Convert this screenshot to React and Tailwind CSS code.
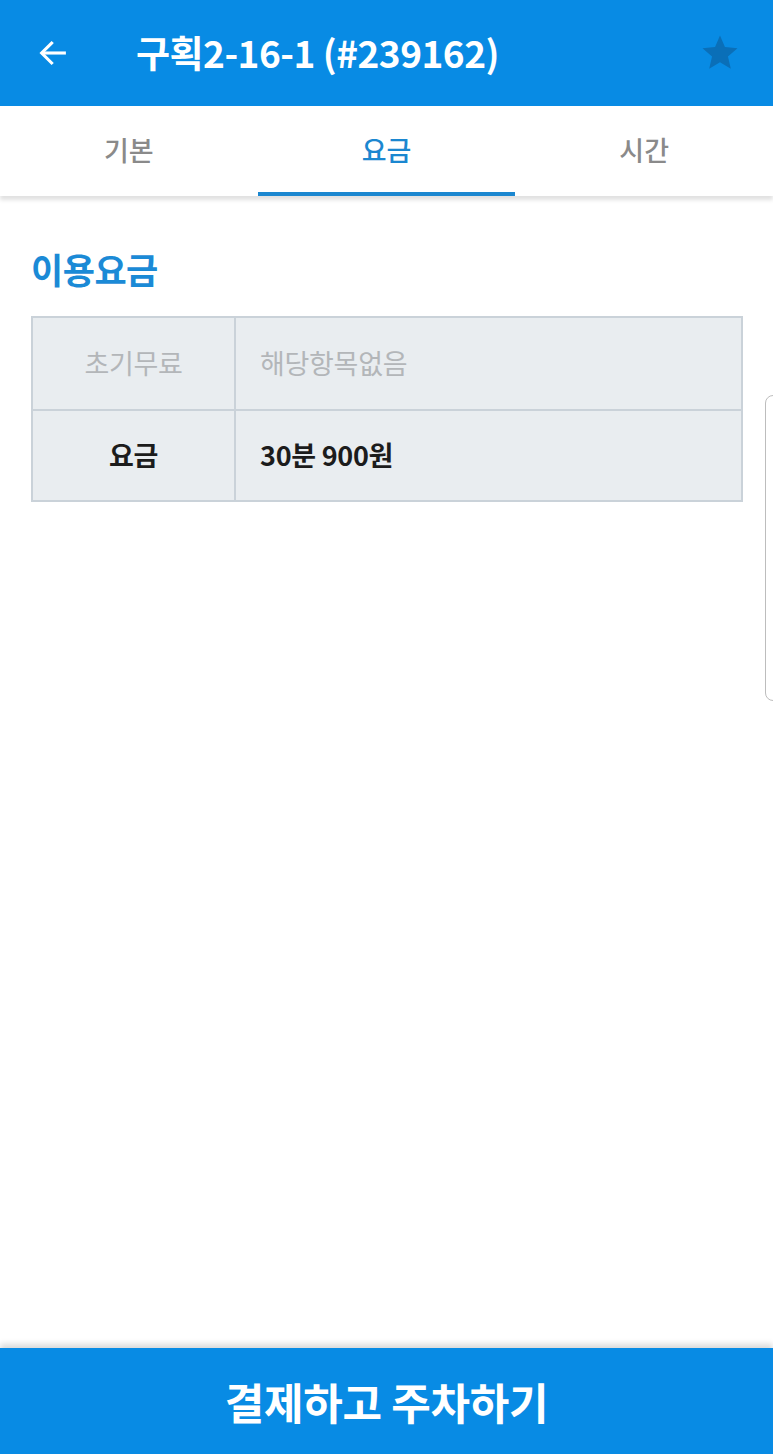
import React from 'react';

const font = { fontFamily: '"Noto Sans CJK KR", "Noto Sans", sans-serif' };

const rows = [
  { label: '초기무료', value: '해당항목없음', muted: true },
  { label: '요금', value: '30분 900원', muted: false },
];

const App = () => {
  return (
    <div className="relative w-[773px] h-[1454px] bg-white flex flex-col overflow-hidden" style={font}>
      {/* Header */}
      <div className="h-[106px] bg-[#088be4] flex items-center px-[36px] shrink-0">
        <svg width="34" height="34" viewBox="0 0 24 24" fill="none" stroke="white" strokeWidth="2.2" strokeLinecap="square">
          <path d="M20 12H5" />
          <path d="M11 5l-7 7 7 7" />
        </svg>
        <div className="ml-[66px] text-white text-[37px] font-bold tracking-[-0.5px] flex-1">구획2-16-1 (#239162)</div>
        <svg width="42" height="42" viewBox="0 0 24 24" fill="#0a6fb8" className="-mr-[4px]">
          <path d="M12 17.27L18.18 21l-1.64-7.03L22 9.24l-7.19-.61L12 2 9.19 8.63 2 9.24l5.46 4.73L5.82 21z" />
        </svg>
      </div>

      {/* Tabs */}
      <div className="h-[90px] flex shrink-0 shadow-[0_4px_4px_rgba(0,0,0,0.12)] relative z-10 bg-white">
        {['기본', '요금', '시간'].map((t, i) => (
          <div key={t} className="flex-1 flex flex-col">
            <div className={`flex-1 flex items-center justify-center pt-[3px] text-[27px] font-medium ${i === 1 ? 'text-[#1b87d0]' : 'text-[#8a8a8a]'}`}>
              {t}
            </div>
            <div className={`h-[4px] ${i === 1 ? 'bg-[#1b87d0]' : ''}`} />
          </div>
        ))}
      </div>

      {/* Content */}
      <div className="flex-1 px-[31px] pt-[55px]">
        <div className="text-[35px] font-bold text-[#1b8ad6] leading-none tracking-[-0.5px]">이용요금</div>
        <div className="mt-[30px] w-[712px] border-2 border-[#cad2d9] bg-[#e9edf0]">
          {rows.map((r, i) => (
            <div key={r.label} className={`flex h-[91px] ${i > 0 ? 'border-t-2 border-[#cad2d9]' : ''}`}>
              <div className={`w-[203px] border-r-2 border-[#cad2d9] flex items-center justify-center text-[27px] tracking-[-0.3px] ${r.muted ? 'text-[#b3b6b9]' : 'text-[#1c1c1c] font-bold'}`}>
                {r.label}
              </div>
              <div className={`flex-1 flex items-center pl-[24px] text-[27px] tracking-[-0.3px] ${r.muted ? 'text-[#b3b6b9]' : 'text-[#1c1c1c] font-bold'}`}>
                {r.value}
              </div>
            </div>
          ))}
        </div>
      </div>

      {/* Bottom button */}
      <div className="h-[106px] shrink-0 bg-[#088be4] flex items-center justify-center text-white text-[43px] font-bold tracking-[-0.3px] shadow-[0_-4px_6px_rgba(0,0,0,0.15)]">
        결제하고 주차하기
      </div>

      {/* Edge panel handle */}
      <div className="absolute left-[765px] top-[395px] w-[20px] h-[306px] rounded-[8px] border border-[#bdbdbd] bg-white" />
    </div>
  );
};

export default App;
